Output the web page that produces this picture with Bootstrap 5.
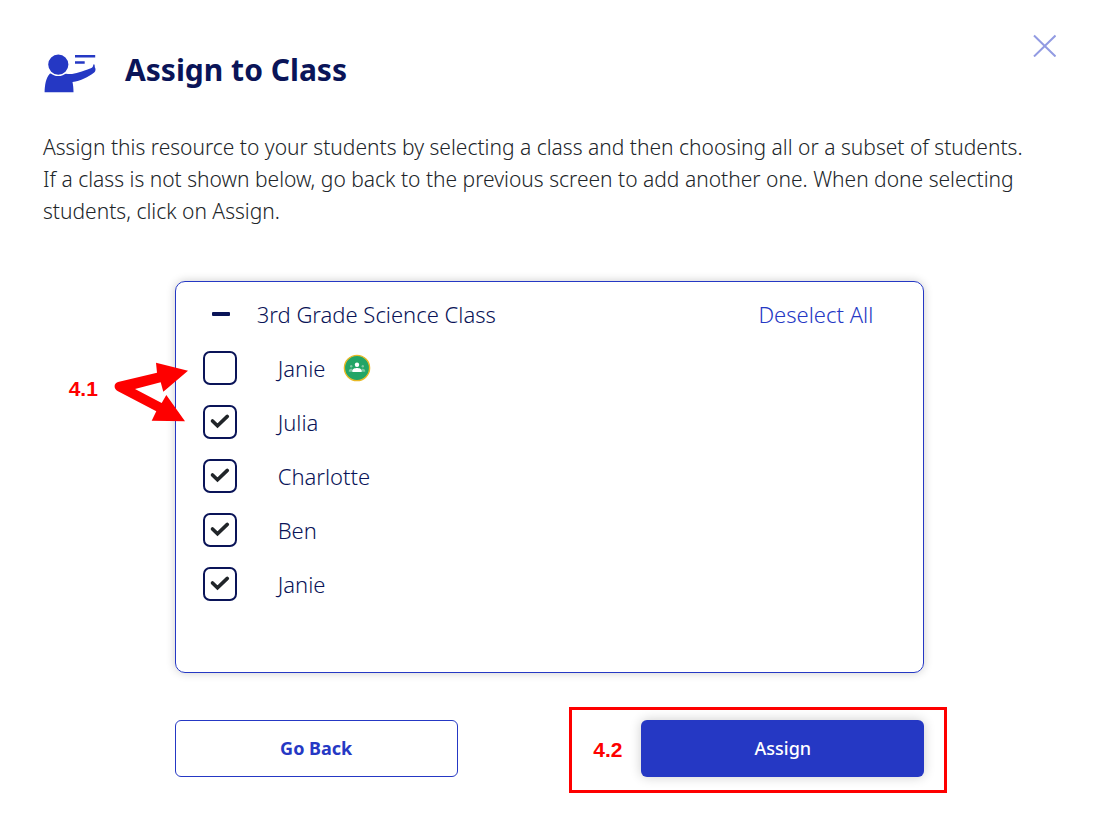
<!DOCTYPE html>
<html lang="en">
<head>
<meta charset="utf-8">
<meta name="viewport" content="width=device-width, initial-scale=1">
<title>Assign to Class</title>
<link href="https://cdn.jsdelivr.net/npm/bootstrap@5.3.0/dist/css/bootstrap.min.css" rel="stylesheet">
<style>
  :root { --brand: #2538c4; --navy: #0a1458; --alert: #fe0000; }
  body { font-family: "Noto Sans", sans-serif; font-size: 21px; font-weight: 340; line-height: 32px; color: #212529; background: #fff; }
  .assign-page { padding: 33px 50px 20px 43px; }
  .page-title { font-size: 30px; line-height: 42px; font-weight: 700; color: var(--navy); }
  .title-icon { margin-top: 20px; }
  .close-x { width: 24px; height: 24px; color: #929be2; }
  .intro { margin-top: 38px; margin-bottom: 54px; padding-right: 20px; }
  .narrow { width: 74%; }
  .class-panel { border: 1px solid var(--brand); border-radius: 10px; padding: 16px 50px 71px 27px; font-size: 22px; color: var(--navy); box-shadow: 0 0 10px rgba(0, 0, 0, .2); }
  .collapse-btn { width: 36px; height: 32px; color: var(--navy); }
  .class-name { margin-left: 18px; }
  .student-list { gap: 20px; margin-top: 21px; }
  .student { height: 34px; }
  .student label { margin-left: 41px; margin-right: 18px; }
  .student .form-check-input { width: 34px; height: 34px; border: 2px solid var(--navy); border-radius: 7px; background-color: #fff; }
  .student .form-check-input:checked { background-color: #fff; background-size: 100% 100%;
    background-image: url("data:image/svg+xml,%3csvg xmlns='http://www.w3.org/2000/svg' viewBox='0 0 30 30'%3e%3cpath d='M7.500 14l5 4.800 9.800-9.400' fill='none' stroke='%23212529' stroke-width='3.600' stroke-linecap='round'/%3e%3c/svg%3e"); }
  .text-brand { color: var(--brand); }
  .actions { margin-top: 47px; }
  .btn-wide { width: 283px; height: 57px; font-size: 18px; border-radius: 6px; }
  .btn-back { border: 1px solid var(--brand); color: var(--brand); font-weight: 700; }
  .btn-assign { background: var(--brand); color: #fff; font-weight: 500; box-shadow: 0 0 12px rgba(0, 0, 0, .2); }
  .note { font-family: "Liberation Sans", sans-serif; font-weight: 700; font-size: 21px; line-height: 24px; color: var(--alert); }
  .note-arrows { left: -107px; top: 79px; }
  .note-frame { left: -72px; right: -23px; top: -13px; bottom: -16px; border: 3px solid var(--alert); padding-left: 21px; pointer-events: none; }
</style>
</head>
<body>
<main class="assign-page container-fluid">
  <header class="d-flex justify-content-between align-items-start">
    <div class="d-flex">
      <svg class="title-icon" width="54" height="40" viewBox="0 0 54 40" fill="#2538c4" aria-hidden="true">
        <path d="M1.600 39.300C1.800 32 2.800 25 7 20.500L23 20.800c8 1.200 14-1.600 24.800-5.500 1.800-.7 2.200-1.600 2.400-3 .2-1.400 1.300-1.200 1.500.1.100 1.100 0 1.800.5 2.600.6 1 .4 3.400-1 4.400-6.200 4.600-13.300 8.300-21.700 9.600.7 3.500 1 6.200 1 10.300z"/>
        <circle cx="15.300" cy="11.600" r="10.800" stroke="#fff" stroke-width="1.400"/>
        <path d="M32 2h20.200v2.400H32zM32 8.200h9.700v2.600H32z"/>
      </svg>
      <h1 class="page-title mb-0 mt-3 ms-4 ps-1">Assign to Class</h1>
    </div>
    <button type="button" class="btn p-0 border-0 d-flex close-x" aria-label="Close">
      <svg width="24" height="24" viewBox="0 0 24 24" fill="none" stroke="currentColor" stroke-width="2" aria-hidden="true"><path d="M2 2.500l21.500 21M23.500 2.500l-21.500 21"/></svg>
    </button>
  </header>

  <p class="intro">Assign this resource to your students by selecting a class and then choosing all or a subset of students. If a class is not shown below, go back to the previous screen to add another one. When done selecting students, click on Assign.</p>

  <section class="class-panel narrow mx-auto position-relative">
    <div class="d-flex align-items-center">
      <button type="button" class="btn p-0 border-0 d-flex align-items-center justify-content-center collapse-btn" aria-label="Collapse class">
        <svg width="18" height="4" viewBox="0 0 18 4" aria-hidden="true"><rect width="18" height="4" rx="1" fill="currentColor"/></svg>
      </button>
      <span class="class-name">3rd Grade Science Class</span>
      <a href="#" class="ms-auto text-decoration-none text-brand">Deselect All</a>
    </div>
    <div class="student-list d-flex flex-column">
      <div class="student d-flex align-items-center">
        <input class="form-check-input mt-0" type="checkbox" id="s1">
        <label for="s1">Janie</label>
        <svg width="28" height="28" viewBox="0 0 28 28" role="img" aria-label="Google Classroom">
          <circle cx="14" cy="14" r="12.600" fill="#23a566" stroke="#e8b925" stroke-width="1.400"/>
          <g fill="#7cc9a2"><circle cx="8.200" cy="12.300" r="1.200"/><circle cx="19.800" cy="12.300" r="1.200"/><path d="M5.800 17.700v-1c0-1.300 2.200-2 3.500-1.800v2.800zM22.200 17.700v-1c0-1.300-2.200-2-3.500-1.800v2.800z"/></g>
          <g fill="#fff"><circle cx="14" cy="10.800" r="2.200"/><path d="M9.300 17.900v-1.400c0-1.700 3-2.500 4.700-2.500s4.700.8 4.700 2.500v1.400z"/></g>
        </svg>
      </div>
      <div class="student d-flex align-items-center">
        <input class="form-check-input mt-0" type="checkbox" id="s2" checked>
        <label for="s2">Julia</label>
      </div>
      <div class="student d-flex align-items-center">
        <input class="form-check-input mt-0" type="checkbox" id="s3" checked>
        <label for="s3">Charlotte</label>
      </div>
      <div class="student d-flex align-items-center">
        <input class="form-check-input mt-0" type="checkbox" id="s4" checked>
        <label for="s4">Ben</label>
      </div>
      <div class="student d-flex align-items-center">
        <input class="form-check-input mt-0" type="checkbox" id="s5" checked>
        <label for="s5">Janie</label>
      </div>
    </div>
    <div class="note note-arrows position-absolute d-flex align-items-start">
      <span class="pt-3">4.1</span>
      <svg class="ms-2" width="84" height="64" viewBox="106 362 84 64" fill="currentColor" aria-hidden="true">
        <path d="M118 383L157 373.700 156 363.700 188 371.700 163.300 392.700 160.700 383.300 135 390 161.700 404 166.300 396 185 422.300 151.700 421.700 156.300 412.300 118 392.300C113.500 390 113.500 384.200 118 383z"/>
      </svg>
    </div>
  </section>

  <div class="actions narrow mx-auto d-flex justify-content-between">
    <button type="button" class="btn btn-wide btn-back">Go Back</button>
    <div class="position-relative">
      <button type="button" class="btn btn-wide btn-assign">Assign</button>
      <div class="note note-frame position-absolute d-flex align-items-center">4.2</div>
    </div>
  </div>
</main>
<script src="https://cdn.jsdelivr.net/npm/bootstrap@5.3.0/dist/js/bootstrap.bundle.min.js"></script>
</body>
</html>
